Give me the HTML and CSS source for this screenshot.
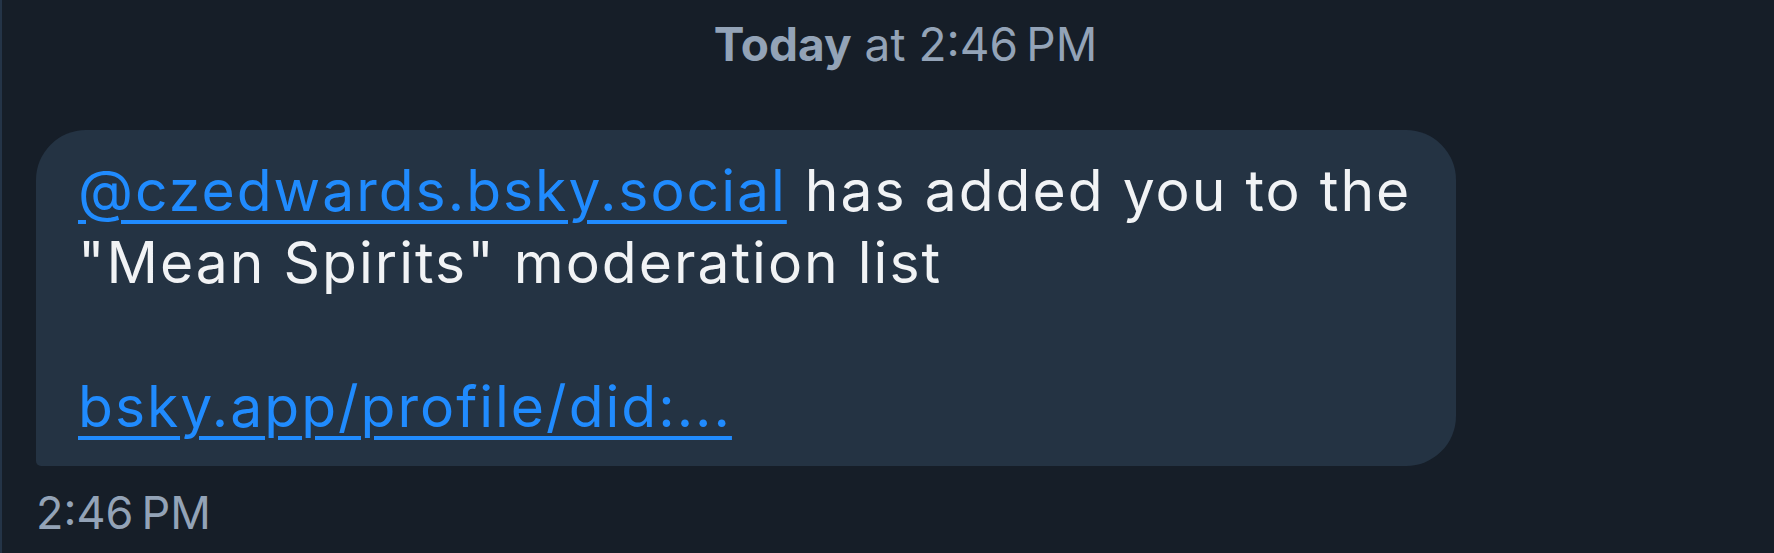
FILE: index.html
```html
<!DOCTYPE html>
<html lang="en">
<head>
<meta charset="utf-8">
<title>Message</title>
<link rel="stylesheet" href="styles.css">
</head>
<body>
<main class="chat">
  <div class="date-header"><strong>Today</strong> at 2:46&#8239;PM</div>
  <div class="message">
    <div class="bubble">
      <p class="bubble-text"><a class="link" href="#">@czedwards.bsky.social</a> has added you to the "Mean Spirits" moderation list<br><br><a class="link" href="#">bsky.app/profile/did:...</a></p>
    </div>
    <div class="meta">2:46&#8239;PM</div>
  </div>
</main>
</body>
</html>
```
FILE: styles.css
```css
html, body {
  margin: 0;
  padding: 0;
  height: 100%;
}
body {
  background: #161e28;
  font-family: Inter, "Noto Sans", sans-serif;
  overflow: hidden;
}
.chat {
  height: 100%;
  border-left: 2px solid #243447;
  box-sizing: border-box;
  display: flex;
  flex-direction: column;
}
.date-header {
  padding: 16px 0 0 35px;
  text-align: center;
  font-size: 46px;
  line-height: 56px;
  color: #93a3b7;
}
.date-header strong {
  font-weight: 700;
}
.message {
  margin-top: 58px;
  padding-left: 34px;
  display: flex;
  flex-direction: column;
  align-items: flex-start;
}
.bubble {
  width: 1420px;
  box-sizing: border-box;
  background: #243343;
  border-radius: 50px 50px 50px 5px;
  padding: 25px 36px 23px 42px;
}
.bubble-text {
  margin: 0;
  font-size: 57px;
  line-height: 72px;
  letter-spacing: 2px;
  color: #f1f3f5;
}
.link {
  color: #208bfe;
  text-decoration: underline;
  text-decoration-thickness: 4px;
  text-underline-offset: 9px;
}
.meta {
  margin-top: 20px;
  font-size: 45px;
  line-height: 54px;
  color: #93a3b7;
}
```
